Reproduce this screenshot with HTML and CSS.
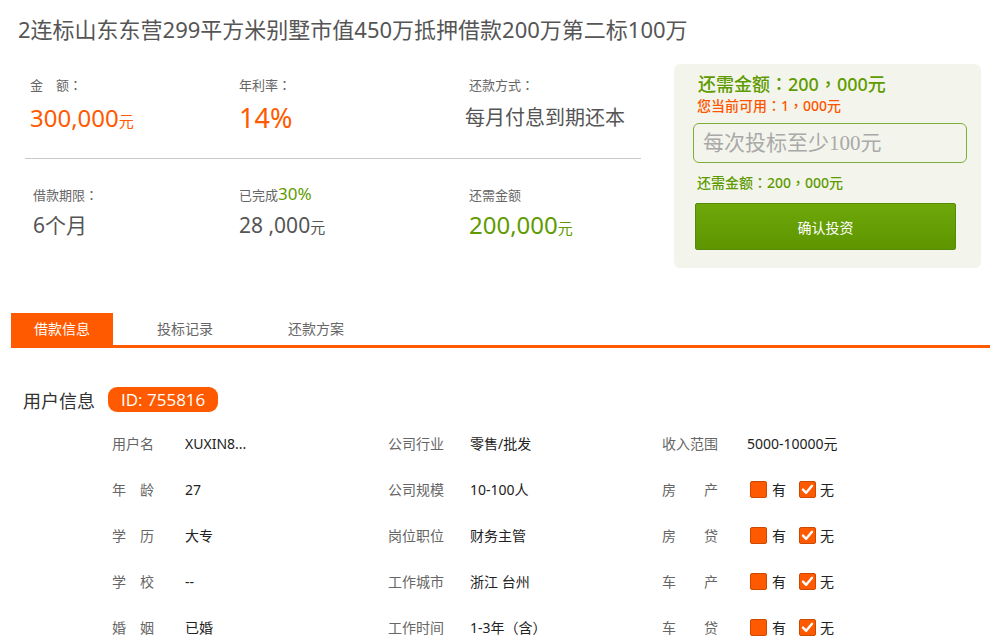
FILE: index.html
```html
<!DOCTYPE html>
<html lang="zh-CN">
<head>
<meta charset="utf-8">
<title>借款详情</title>
<link rel="stylesheet" href="styles.css">
</head>
<body>
<div class="page">
  <h1 class="title">2连标山东东营299平方米别墅市值450万抵押借款200万第二标100万</h1>

  <div class="top">
    <div class="stats">
      <div class="stat-row row-one">
        <div class="stat">
          <div class="label">金　额<span class="p" lang="zh-TW">：</span></div>
          <div class="value orange">300,000<span class="unit">元</span></div>
        </div>
        <div class="stat">
          <div class="label">年利率<span class="p" lang="zh-TW">：</span></div>
          <div class="value orange big">14%</div>
        </div>
        <div class="stat">
          <div class="label">还款方式<span class="p" lang="zh-TW">：</span></div>
          <div class="value method">每月付息到期还本</div>
        </div>
      </div>
      <div class="stat-row row-two">
        <div class="stat first-col">
          <div class="label">借款期限<span class="p" lang="zh-TW">：</span></div>
          <div class="value gray">6个月</div>
        </div>
        <div class="stat">
          <div class="label">已完成<span class="pct">30%</span></div>
          <div class="value gray">28 ,000<span class="unit">元</span></div>
        </div>
        <div class="stat">
          <div class="label">还需金额</div>
          <div class="value green">200,000<span class="unit">元</span></div>
        </div>
      </div>
    </div>

    <div class="invest">
      <div class="invest-need">还需金额<span class="p" lang="zh-TW">：</span>200<span class="p" lang="zh-TW">，</span>000元</div>
      <div class="invest-avail">您当前可用<span class="p" lang="zh-TW">：</span>1<span class="p" lang="zh-TW">，</span>000元</div>
      <input class="invest-input" type="text" placeholder="每次投标至少100元">
      <div class="invest-need-small">还需金额<span class="p" lang="zh-TW">：</span>200<span class="p" lang="zh-TW">，</span>000元</div>
      <button class="invest-btn" type="button">确认投资</button>
    </div>
  </div>

  <div class="tabs">
    <div class="tab active">借款信息</div>
    <div class="tab">投标记录</div>
    <div class="tab">还款方案</div>
  </div>

  <div class="user-head">
    <span class="user-title">用户信息</span>
    <span class="badge">ID: 755816</span>
  </div>

  <div class="info-grid">
    <div class="k">用户名</div><div class="v">XUXIN8...</div>
    <div class="k">公司行业</div><div class="v">零售/批发</div>
    <div class="k">收入范围</div><div class="v">5000-10000元</div>

    <div class="k">年　龄</div><div class="v">27</div>
    <div class="k">公司规模</div><div class="v">10-100人</div>
    <div class="k">房　　产</div>
    <div class="v checks">
      <span class="box"></span><span class="opt">有</span>
      <span class="box checked"><svg viewBox="0 0 17 17" width="17" height="17"><path d="M4 8.6 L7.2 11.8 L13 4.8" fill="none" stroke="#fff" stroke-width="2.4" stroke-linecap="round" stroke-linejoin="round"/></svg></span><span class="opt no">无</span>
    </div>

    <div class="k">学　历</div><div class="v">大专</div>
    <div class="k">岗位职位</div><div class="v">财务主管</div>
    <div class="k">房　　贷</div>
    <div class="v checks">
      <span class="box"></span><span class="opt">有</span>
      <span class="box checked"><svg viewBox="0 0 17 17" width="17" height="17"><path d="M4 8.6 L7.2 11.8 L13 4.8" fill="none" stroke="#fff" stroke-width="2.4" stroke-linecap="round" stroke-linejoin="round"/></svg></span><span class="opt no">无</span>
    </div>

    <div class="k">学　校</div><div class="v">--</div>
    <div class="k">工作城市</div><div class="v">浙江 台州</div>
    <div class="k">车　　产</div>
    <div class="v checks">
      <span class="box"></span><span class="opt">有</span>
      <span class="box checked"><svg viewBox="0 0 17 17" width="17" height="17"><path d="M4 8.6 L7.2 11.8 L13 4.8" fill="none" stroke="#fff" stroke-width="2.4" stroke-linecap="round" stroke-linejoin="round"/></svg></span><span class="opt no">无</span>
    </div>

    <div class="k">婚　姻</div><div class="v">已婚</div>
    <div class="k">工作时间</div><div class="v">1-3年<span class="p" lang="zh-TW">（</span>含<span class="p" lang="zh-TW">）</span></div>
    <div class="k">车　　贷</div>
    <div class="v checks">
      <span class="box"></span><span class="opt">有</span>
      <span class="box checked"><svg viewBox="0 0 17 17" width="17" height="17"><path d="M4 8.6 L7.2 11.8 L13 4.8" fill="none" stroke="#fff" stroke-width="2.4" stroke-linecap="round" stroke-linejoin="round"/></svg></span><span class="opt no">无</span>
    </div>
  </div>
</div>
</body>
</html>
```

FILE: styles.css
```css
* { box-sizing: border-box; }

html, body {
  margin: 0;
  padding: 0;
  background: #fff;
}

body {
  font-family: "Noto Sans", "Noto Sans CJK SC", sans-serif;
  color: #333;
}

.page {
  width: 1000px;
}

.p {
  font-family: "Noto Sans CJK TC", "Noto Sans CJK SC", sans-serif;
  line-height: 1;
}

.title {
  margin: 0;
  padding: 14px 18px 20px;
  font-size: 22px;
  line-height: 30px;
  font-weight: normal;
  color: #555;
  white-space: nowrap;
}

/* ---------- top area ---------- */
.top {
  display: flex;
  align-items: flex-start;
}

.stats {
  width: 616px;
  margin-left: 25px;
}

.stat-row {
  display: grid;
  grid-template-columns: 209px 230px 1fr;
  padding-left: 5px;
}

.row-one {
  padding-top: 11px;
  padding-bottom: 24px;
  border-bottom: 1px solid #c9c9c9;
}

.row-two {
  padding-top: 26px;
}

.first-col {
  padding-left: 3px;
}

.label {
  font-size: 13px;
  line-height: 20px;
  color: #666;
  white-space: nowrap;
}

.pct {
  font-size: 17px;
  line-height: 1;
  color: #5f9b00;
}

.row-one .value { margin-top: 7px; }
.row-two .value { margin-top: 4px; }

.value {
  font-size: 24px;
  line-height: 32px;
  white-space: nowrap;
}

.value.big { font-size: 27px; }

.value.method {
  font-size: 20px;
  color: #555;
  margin-left: -4px;
}

.value.gray {
  font-size: 21px;
  color: #555;
}

.orange { color: #ff5a00; }
.green { color: #5f9b00; }

.unit {
  font-size: 15px;
  line-height: 1;
}

/* ---------- invest box ---------- */
.invest {
  margin-left: 33px;
  width: 307px;
  height: 204px;
  background: #f3f5ec;
  border-radius: 6px;
  padding: 8px 14px 17px 19px;
  display: flex;
  flex-direction: column;
  align-items: flex-start;
}

.invest-need {
  margin-left: 5px;
  font-size: 18px;
  line-height: 24px;
  color: #5f9b00;
  font-weight: 500;
}

.invest-avail {
  margin-left: 4px;
  font-size: 14px;
  line-height: 20px;
  color: #ff5500;
  font-weight: 500;
}

.invest-input {
  margin-top: 7px;
  width: 274px;
  height: 40px;
  border: 1px solid #80ae3c;
  border-radius: 6px;
  background: transparent;
  padding: 0 9px;
  font-family: "Liberation Serif", "Noto Sans CJK SC", serif;
  font-size: 21px;
  color: #555;
  outline: none;
}

.invest-input::placeholder {
  color: #a9a9a9;
}

.invest-need-small {
  margin-top: 10px;
  margin-left: 4px;
  font-size: 14px;
  line-height: 20px;
  color: #5f9b00;
  font-weight: 500;
}

.invest-btn {
  margin-top: 10px;
  margin-left: 2px;
  width: 261px;
  height: 47px;
  border: 1px solid #548a06;
  border-radius: 2px;
  background: linear-gradient(#6ea80a, #5e9500);
  color: #fff;
  font-family: "Noto Sans CJK SC", sans-serif;
  font-size: 14px;
  cursor: pointer;
}

/* ---------- tabs ---------- */
.tabs {
  display: flex;
  gap: 21px;
  margin: 45px 10px 0 11px;
  border-bottom: 3px solid #ff5a00;
}

.tab {
  width: 102px;
  height: 32px;
  line-height: 32px;
  text-align: center;
  font-size: 14px;
  color: #666;
}

.tab:last-child {
  margin-left: 8px;
}

.tab.active {
  background: #ff5a00;
  color: #fff;
}

/* ---------- user info ---------- */
.user-head {
  display: flex;
  align-items: center;
  gap: 13px;
  height: 25px;
  margin-top: 39px;
  padding-left: 23px;
}

.user-title {
  font-size: 18px;
  color: #333;
}

.badge {
  height: 25px;
  line-height: 25px;
  padding: 0 13px;
  border-radius: 9px;
  background: #ff5a00;
  color: #fff;
  font-family: "Open Sans", sans-serif;
  font-size: 17px;
}

.info-grid {
  display: grid;
  grid-template-columns: 73px 203px 82px 192px 85px 1fr;
  grid-auto-rows: 46px;
  align-items: center;
  margin-top: 8px;
  padding-left: 112px;
  font-size: 14px;
}

.k {
  color: #666;
  white-space: nowrap;
}

.v {
  color: #222;
  white-space: nowrap;
}

.checks {
  display: flex;
  align-items: center;
  padding-left: 3px;
}

.box {
  width: 17px;
  height: 17px;
  background: #ff5a00;
  border: 1px solid #cc4a00;
  border-radius: 2px;
  display: inline-flex;
}

.box svg {
  margin: -1px;
}

.opt {
  margin-left: 5px;
  margin-right: 13px;
}

.opt.no {
  margin-left: 4px;
}
```
